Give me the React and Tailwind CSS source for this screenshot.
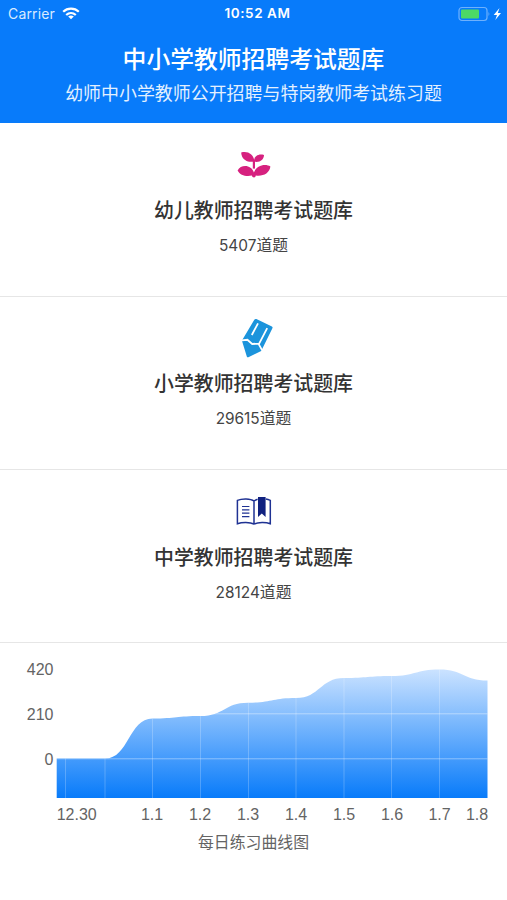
import React from "react";

const SproutIcon = () => (
  <svg width="34" height="28" viewBox="0 0 34 28" fill="#d6217f">
    <path d="M4.2 1.4C10.6 -.4 16.8 3 17.4 10.4C9.8 12 4.4 8 4.2 1.4Z" />
    <path d="M27 4C21.8 2.4 17 4.8 16.9 10.6C22.6 11.8 26.9 9 27 4Z" />
    <path d="M15.8 9.5H18V17.6H15.8Z" />
    <path d="M.6 19.4C4 13 14.6 13.6 16.9 21.6C19.6 13.8 29 12.6 33.4 15.6C32.4 22.6 26 25.6 18.8 24.6Q18.6 26.4 17 26.6Q15.2 26.4 14.8 24.6C8.8 25.8 3 24.2 .6 19.4Z" />
  </svg>
);

const PencilIcon = () => (
  <svg width="38" height="40" viewBox="0 0 38 40">
    <path
      d="M21.4 1.1L36.9 8.6Q38 9.2 37.4 10.3L26.2 33L13.4 39.2Q12.2 39.7 11.8 38.4L7.2 23.4Q7 22.6 7.4 21.8L19.3 1.8Q20.2 .5 21.4 1.1Z"
      fill="#1c94dc"
    />
    <path
      d="M6.8 22.3L12.4 21.8L17.2 26L23.4 25.6L27.2 32.4M23 5.4L16.8 17M32.2 10.2L24 25.8"
      fill="none"
      stroke="#fff"
      strokeWidth="1.8"
    />
  </svg>
);

const BookIcon = () => (
  <svg width="36" height="30" viewBox="0 0 36 30">
    <g fill="none" stroke="#1f3293" strokeWidth="1.5">
      <path d="M18 5C14.5 2.3 6 2.3 1.4 4.4V27.7C6 26 14 26 18 28C22 26 30 26 34.3 27.7V4.4Q32.2 3.4 29.8 3.1M18 5V28M18 5Q19.6 3.7 21.6 3.2" />
      <path d="M6 10.5H13.4M6 13.9H13.4M6 17.2H13.4M6 20.6H13.4" strokeWidth="1.2" />
    </g>
    <path d="M22 .9H29.6V21L25.8 17.4L22 21Z" fill="#10217f" />
  </svg>
);

const banks = [
  { title: "幼儿教师招聘考试题库", total: "5407", icon: <SproutIcon /> },
  { title: "小学教师招聘考试题库", total: "29615", icon: <PencilIcon /> },
  { title: "中学教师招聘考试题库", total: "28124", icon: <BookIcon /> },
];

const xLabels = [
  { text: "12.30", x: 76.7 },
  { text: "1.1", x: 152 },
  { text: "1.2", x: 200 },
  { text: "1.3", x: 248 },
  { text: "1.4", x: 296 },
  { text: "1.5", x: 344 },
  { text: "1.6", x: 392 },
  { text: "1.7", x: 439.5 },
  { text: "1.8", x: 477 },
];

const yLabels = [
  { text: "420", y: 32 },
  { text: "210", y: 76.5 },
  { text: "0", y: 121.5 },
];

const points = [
  [56.7, 115.6],
  [105, 115.6],
  [152.5, 75.5],
  [200.5, 73],
  [248, 59.7],
  [296, 55],
  [344, 35],
  [391.5, 33],
  [439.5, 26.5],
  [487.5, 37.5],
];

// flat tangents at every point, so each step eases in and out
const curve = points
  .map(([x, y], i) => {
    if (i === 0) return `M${x} ${y}`;
    const [px, py] = points[i - 1];
    const mid = (px + x) / 2;
    return `C${mid} ${py} ${mid} ${y} ${x} ${y}`;
  })
  .join("");
const area = `${curve}V155H56.7Z`;

const PracticeChart = () => (
  <svg width="507" height="184" viewBox="0 0 507 184" className="block">
    <defs>
      <linearGradient id="fill" x1="0" y1="26" x2="0" y2="155" gradientUnits="userSpaceOnUse">
        <stop offset="0" stopColor="#cce3ff" />
        <stop offset="1" stopColor="#087bfa" />
      </linearGradient>
      <clipPath id="area">
        <path d={area} />
      </clipPath>
    </defs>
    <path d={area} fill="url(#fill)" />
    <g clipPath="url(#area)" stroke="#fff">
      <path d="M56 70.8H488M56 115.8H488" strokeOpacity=".4" />
      <path
        d="M65.5 26V155M105 26V155M152.5 26V155M200.5 26V155M248.5 26V155M296 26V155M344 26V155M391.5 26V155M439.5 26V155"
        strokeOpacity=".22"
      />
    </g>
    <g fill="#646464" fontSize="16" className="font-['Liberation_Sans',sans-serif]">
      {yLabels.map((l) => (
        <text key={l.text} x="53.5" y={l.y} textAnchor="end">
          {l.text}
        </text>
      ))}
      {xLabels.map((l) => (
        <text key={l.text} x={l.x} y="176.5" textAnchor="middle">
          {l.text}
        </text>
      ))}
    </g>
  </svg>
);

const StatusBar = () => (
  <div className="grid h-[27px] grid-cols-3 items-center pl-2 pr-1 text-white font-['Inter',sans-serif]">
    <div className="flex items-center gap-[7px] text-[#d9eaff]">
      <span className="text-[14px] tracking-[0.15px]">Carrier</span>
      <svg width="18" height="13" viewBox="0 0 18 13" fill="none" stroke="#fff" strokeWidth="2.2">
        <path d="M1.2 4.8C5.5 .6 12.5 .6 16.8 4.8M4.2 8C7 5.4 11 5.4 13.8 8" />
        <path d="M9 12.3L6.2 9.5Q9 7.5 11.8 9.5Z" fill="#fff" stroke="none" />
      </svg>
    </div>
    <div className="whitespace-nowrap pl-1 text-center text-[13.5px] font-semibold tracking-[0.55px]">10:52 AM</div>
    <div className="flex items-center justify-end">
      <svg width="45" height="16" viewBox="0 0 45 16">
        <rect x="1" y="1.5" width="28" height="13" rx="3" fill="none" stroke="#6eb1fd" strokeWidth="1.2" />
        <rect x="3" y="3.5" width="18" height="9" rx="1" fill="#4cd964" />
        <path d="M30.5 5.8Q32.3 8 30.5 10.2Z" fill="#6eb1fd" />
        <path d="M41.5 2L35.7 9H39L37.3 14L43 7H39.8Z" fill="#fff" />
      </svg>
    </div>
  </div>
);

export default function App() {
  return (
    <div className="h-[900px] w-[507px] overflow-hidden bg-white font-['Noto_Sans_CJK_SC',sans-serif]">
      <header className="h-[123.4px] bg-[#087bfa] text-center text-white">
        <StatusBar />
        <h1 className="mt-[13px] text-[23.8px] font-medium leading-9">中小学教师招聘考试题库</h1>
        <p className="mt-0.5 text-[17.95px] leading-7 text-[#e3f0ff]">
          幼师中小学教师公开招聘与特岗教师考试练习题
        </p>
      </header>

      {banks.map((bank) => (
        <section
          key={bank.title}
          className="flex h-[173.3px] flex-col items-center border-b border-[#e6e6e6] pt-[21.5px]"
        >
          <div className="flex h-10 items-center">{bank.icon}</div>
          <h2 className="mt-[10.3px] text-[19.9px] font-medium leading-[30px] text-[#333]">{bank.title}</h2>
          <p className="mt-2 flex items-baseline text-[15.8px] leading-6 text-[#444]">
            <span className="text-[15.4px] font-['Inter',sans-serif]">{bank.total}</span>道题
          </p>
        </section>
      ))}

      <PracticeChart />
      <p className="mt-[3px] text-center text-[15.9px] leading-6 text-[#646464]">每日练习曲线图</p>
    </div>
  );
}
